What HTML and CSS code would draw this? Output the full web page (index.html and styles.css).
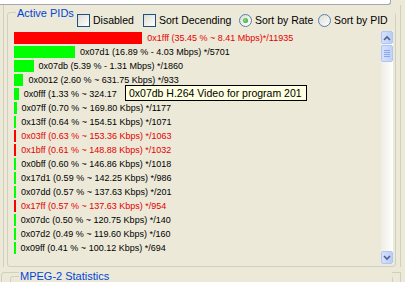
FILE: index.html
```html
<!DOCTYPE html>
<html lang="en">
<head>
    <meta charset="UTF-8">
    <title>Active PIDs</title>
    <link rel="stylesheet" href="styles.css">
</head>
<body>
    <div class="topbox"></div>

    <div class="panel">
        <div class="group">
            <div class="group-head">
                <div class="legend">Active PIDs</div>
                <div class="opts">
                    <label class="opt opt-disabled"><span class="check"></span>Disabled</label>
                    <label class="opt opt-desc"><span class="check"></span>Sort Decending</label>
                    <label class="opt opt-rate"><span class="radio on"></span>Sort by Rate</label>
                    <label class="opt"><span class="radio"></span>Sort by PID</label>
                </div>
            </div>

            <div class="list">
                <div class="rows">
                    <div class="row red"><span class="bar" style="width:128.3px"></span>0x1fff (35.45 % ~ 8.41 Mbps)*/11935</div>
                    <div class="row"><span class="bar" style="width:61.1px"></span>0x07d1 (16.89 % - 4.03 Mbps) */5701</div>
                    <div class="row"><span class="bar" style="width:19.5px"></span>0x07db (5.39 % - 1.31 Mbps) */1860</div>
                    <div class="row"><span class="bar" style="width:9.4px"></span>0x0012 (2.60 % ~ 631.75 Kbps) */933</div>
                    <!-- rest of this row sits under the tooltip -->
                    <div class="row"><span class="bar" style="width:4.8px"></span>0x0fff (1.33 % ~ 324.17</div>
                    <div class="row"><span class="bar" style="width:2.5px"></span>0x07ff (0.70 % ~ 169.80 Kbps) */1177</div>
                    <div class="row"><span class="bar" style="width:2.3px"></span>0x13ff (0.64 % ~ 154.51 Kbps) */1071</div>
                    <div class="row red"><span class="bar" style="width:2.3px"></span>0x03ff (0.63 % ~ 153.36 Kbps) */1063</div>
                    <div class="row red"><span class="bar" style="width:2.2px"></span>0x1bff (0.61 % ~ 148.88 Kbps) */1032</div>
                    <div class="row"><span class="bar" style="width:2.2px"></span>0x0bff (0.60 % ~ 146.86 Kbps) */1018</div>
                    <div class="row"><span class="bar" style="width:2.1px"></span>0x17d1 (0.59 % ~ 142.25 Kbps) */986</div>
                    <div class="row"><span class="bar" style="width:2.1px"></span>0x07dd (0.57 % ~ 137.63 Kbps) */201</div>
                    <div class="row red"><span class="bar" style="width:2.1px"></span>0x17ff (0.57 % ~ 137.63 Kbps) */954</div>
                    <div class="row"><span class="bar" style="width:1.8px"></span>0x07dc (0.50 % ~ 120.75 Kbps) */140</div>
                    <div class="row"><span class="bar" style="width:1.8px"></span>0x07d2 (0.49 % ~ 119.60 Kbps) */160</div>
                    <div class="row"><span class="bar" style="width:1.5px"></span>0x09ff (0.41 % ~ 100.12 Kbps) */694</div>
                </div>

                <div class="scrollbar">
                    <div class="sb-btn">
                        <svg width="8" height="6" viewBox="0 0 8 6"><path d="M1 5 L4 2 L7 5" fill="none" stroke="#4d6185" stroke-width="1.6"/></svg>
                    </div>
                    <div class="sb-thumb"><span></span><span></span><span></span><span></span></div>
                    <div class="sb-track"></div>
                    <div class="sb-btn">
                        <svg width="8" height="6" viewBox="0 0 8 6"><path d="M1 1 L4 4 L7 1" fill="none" stroke="#4d6185" stroke-width="1.6"/></svg>
                    </div>
                </div>
            </div>
        </div>
    </div>

    <div class="lower">
        <div class="group group2">
            <div class="group-head">
                <div class="legend">MPEG-2 Statistics</div>
            </div>
        </div>
    </div>

    <!-- Tooltip over the list -->
    <div class="tooltip">0x07db H.264 Video for program 201</div>
</body>
</html>
```

FILE: styles.css
```css
body {
    font-family: "Liberation Sans", Arial, sans-serif;
    font-size: 10.5px;
    background-color: #ece9d8;
    color: #000;
    margin: 0;
    padding: 0;
    width: 405px;
    height: 282px;
    overflow: hidden;
    position: relative;
}

/* White box cut off at the top */
.topbox {
    width: 390px;
    height: 4px;
    background-color: #fff;
    border-bottom: 1px solid #a7a6aa;
    border-right: 1px solid #a7a6aa;
    border-radius: 0 0 3px 0;
}

.panel {
    box-sizing: border-box;
    width: 398px;
    height: 262px;
    margin-left: 3px;
    padding: 7px 0 0 3px;
    border-left: 1px solid #d0d0bf;
    border-right: 1px solid #d0d0bf;
}

/* Group boxes */
.group {
    box-sizing: border-box;
    width: 389px;
    height: 255px;
    border: 1px solid #d0d0bf;
    border-radius: 3px;
}

.group-head {
    display: flex;
    align-items: flex-start;
    margin: -6px 0 0 8px;
    height: 20px;
    background-color: #ece9d8;
}

.legend {
    width: 60px;
    padding-left: 1px;
    font-size: 11px;
    line-height: 12px;
    color: #0046d5;
    white-space: nowrap;
}

.opts {
    display: flex;
    align-items: center;
    margin-top: 7px;
    height: 13px;
}

.opt {
    display: flex;
    align-items: center;
    gap: 3px;
    line-height: 13px;
    white-space: nowrap;
}

.opt-disabled { width: 66px; }
.opt-desc { width: 96px; }
.opt-rate { width: 79px; }

.check {
    box-sizing: border-box;
    width: 13px;
    height: 13px;
    border: 1px solid #1c5180;
    background: linear-gradient(135deg, #dcdcd7, #fff);
}

.radio {
    box-sizing: border-box;
    width: 13px;
    height: 13px;
    border-radius: 50%;
    border: 1px solid #5a7ea8;
    background: linear-gradient(135deg, #dcdcd7, #fff);
    display: flex;
    align-items: center;
    justify-content: center;
}

.radio.on::after {
    content: "";
    width: 5px;
    height: 5px;
    border-radius: 50%;
    background: radial-gradient(circle at 40% 40%, #7fe07f, #21a121);
}

/* PID list */
.list {
    display: flex;
    margin-top: 4px;
    height: 233px;
}

.rows {
    flex: 1;
    padding: 1px 0 0 6px;
    overflow: hidden;
}

.row {
    display: flex;
    align-items: center;
    height: 12px;
    margin-bottom: 2px;
    font-size: 9px;
    line-height: 12px;
    white-space: nowrap;
}

.row .bar {
    flex-shrink: 0;
    height: 12px;
    margin-right: 5px;
    background-color: #00ff00;
}

.row.red {
    color: #e60000;
}

.row.red .bar {
    background-color: #ff0000;
}

/* XP style scrollbar */
.scrollbar {
    display: flex;
    flex-direction: column;
    width: 12px;
    margin-right: 2px;
    background: linear-gradient(to right, #eeede5, #fefefe);
}

.sb-btn {
    box-sizing: border-box;
    height: 13px;
    border: 1px solid #b1c5f5;
    border-radius: 2px;
    background: linear-gradient(to right, #d6e1fd, #b9cdf8);
    display: flex;
    align-items: center;
    justify-content: center;
}

.sb-thumb {
    box-sizing: border-box;
    height: 17px;
    margin-top: 1px;
    border: 1px solid #b1c5f5;
    border-radius: 2px;
    background: linear-gradient(to right, #d6e1fd, #c0d2fa);
    display: flex;
    flex-direction: column;
    align-items: center;
    justify-content: center;
    gap: 1px;
}

.sb-thumb span {
    width: 6px;
    height: 1px;
    background-color: #8ca6e6;
}

.sb-track {
    flex: 1;
}

/* Lower panel, cut off at the bottom */
.lower {
    box-sizing: border-box;
    width: 400px;
    height: 10px;
    margin: 5px 0 0 1px;
    padding: 3px 0 0 8px;
    border-left: 1px solid #d0d0bf;
    border-top: 1px solid #d0d0bf;
    border-right: 1px solid #d0d0bf;
    border-radius: 4px 0 0 0;
}

.group2 {
    width: 383px;
    height: 6px;
    border-bottom: none;
    border-radius: 3px 3px 0 0;
}

.group2 .group-head {
    height: 11px;
}

.group2 .legend {
    width: auto;
    padding: 0 1px;
    line-height: 11px;
}

/* Tooltip */
.tooltip {
    position: absolute;
    left: 125px;
    top: 85px;
    box-sizing: border-box;
    width: 182px;
    height: 16px;
    padding-left: 3px;
    background-color: #ffffe1;
    border: 1px solid #000;
    line-height: 14px;
    white-space: nowrap;
}
```
